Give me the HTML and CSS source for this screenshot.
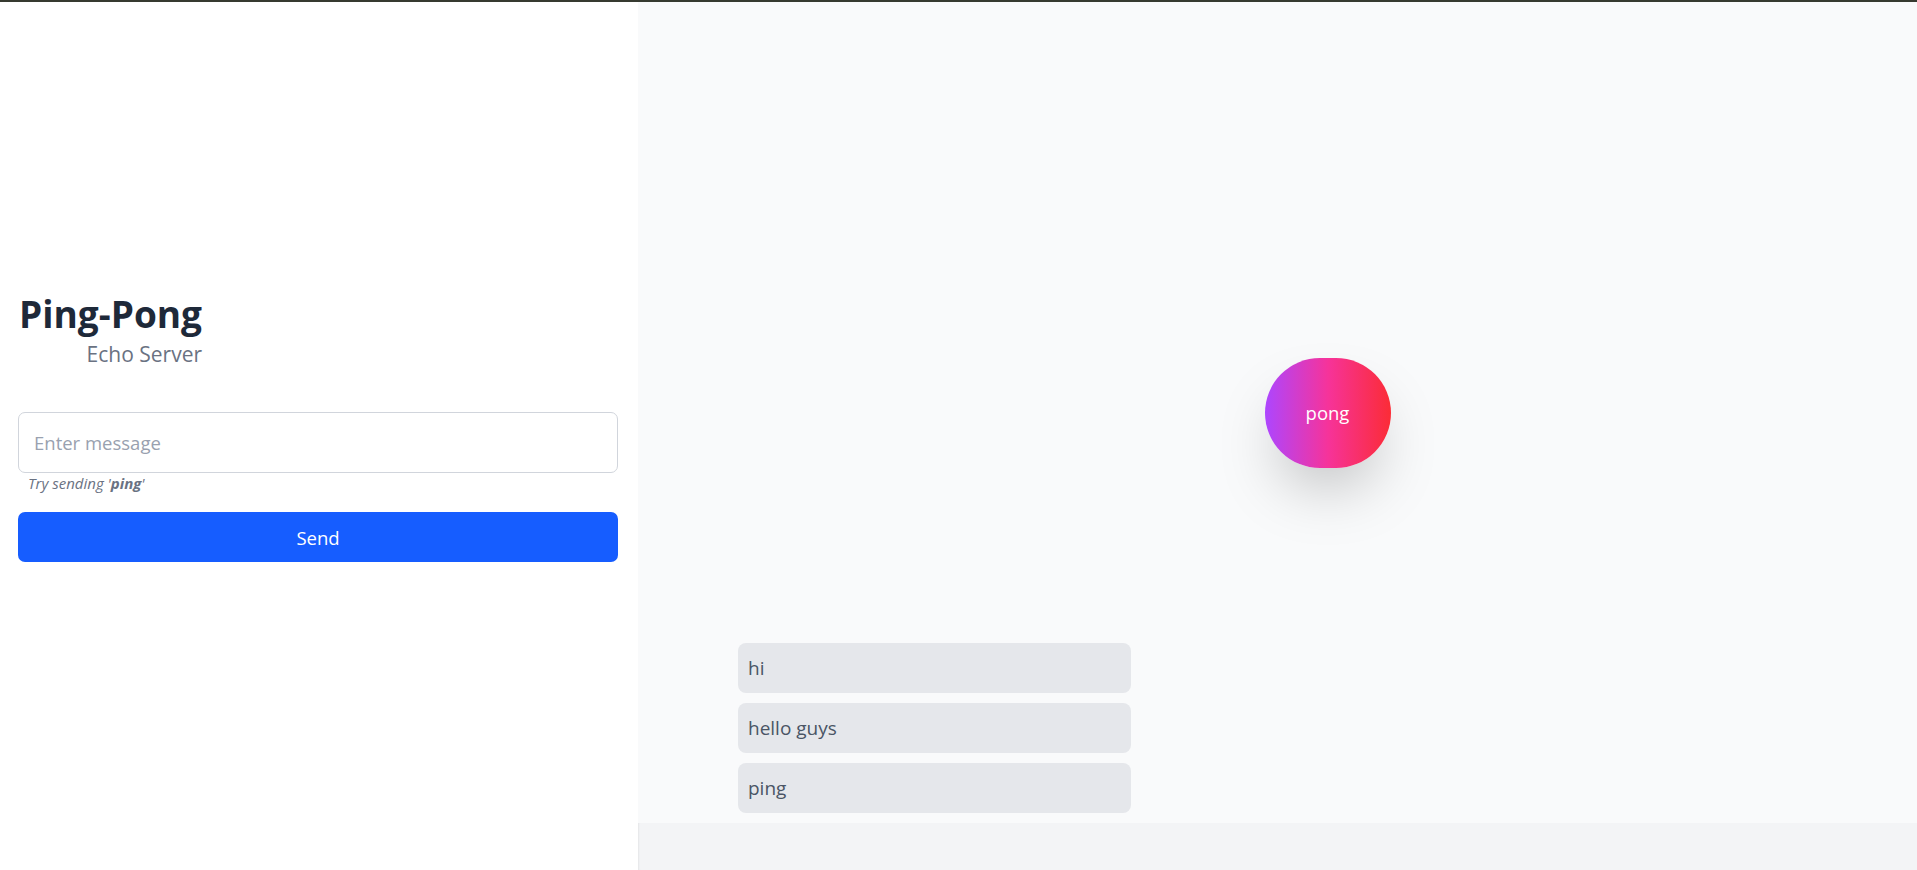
FILE: index.html
```html
<!DOCTYPE html>
<html lang="en">
<head>
<meta charset="utf-8">
<title>Ping-Pong Echo Server</title>
<link rel="stylesheet" href="styles.css">
</head>
<body>
<div class="topbar"></div>
<div class="app">
  <aside class="sidebar">
    <div class="brand">
      <h1 class="title">Ping-Pong</h1>
      <p class="subtitle">Echo Server</p>
    </div>
    <form class="composer">
      <input class="msg-input" type="text" placeholder="Enter message">
      <p class="hint">Try sending '<b>ping</b>'</p>
      <button class="send" type="button">Send</button>
    </form>
  </aside>
  <main class="chat">
    <div class="feed">
      <div class="stage"><div class="pong">pong</div></div>
      <ul class="messages">
        <li class="bubble">hi</li>
        <li class="bubble">hello guys</li>
        <li class="bubble">ping</li>
      </ul>
    </div>
    <div class="footer"></div>
  </main>
</div>
</body>
</html>
```
FILE: styles.css
```css
* { box-sizing: border-box; }
html, body {
  margin: 0;
  padding: 0;
  height: 870px;
  overflow: hidden;
  font-family: "Open Sans", "Noto Sans", "Liberation Sans", sans-serif;
  background: #ffffff;
}
.topbar {
  height: 2px;
  background: #363a30;
}
.app {
  display: flex;
  height: 868px;
}
.sidebar {
  width: 638px;
  flex: none;
  background: #ffffff;
  padding: 289px 20px 0 18px;
  display: flex;
  flex-direction: column;
}
.brand {
  width: fit-content;
  padding-left: 1px;
}
.title {
  margin: 0;
  font-size: 37px;
  line-height: 45px;
  font-weight: 700;
  color: #1e2939;
}
.subtitle {
  margin: 4px 0 0;
  text-align: right;
  font-size: 21px;
  line-height: 28px;
  color: #6a7282;
}
.composer {
  margin-top: 44px;
  display: flex;
  flex-direction: column;
}
.msg-input {
  width: 600px;
  height: 61px;
  border: 1px solid #d1d5dc;
  border-radius: 7px;
  padding: 0 15px;
  font-family: inherit;
  font-size: 18.5px;
  color: #1e2939;
  background: #ffffff;
  outline: none;
}
.msg-input::placeholder { color: #99a1af; }
.hint {
  margin: 0;
  padding-left: 10px;
  font-size: 15px;
  line-height: 20px;
  font-style: italic;
  color: #6a7282;
}
.hint b { font-weight: 700; }
.send {
  margin-top: 19px;
  width: 600px;
  height: 50px;
  border: none;
  border-radius: 7px;
  background: #165dff;
  color: #ffffff;
  font-family: inherit;
  font-size: 18.5px;
}
.chat {
  flex: 1;
  display: flex;
  flex-direction: column;
  background: #f9fafb;
}
.feed {
  flex: 1;
  position: relative;
  display: flex;
  flex-direction: column;
  justify-content: flex-end;
  padding: 0 0 10px 100px;
}
.stage {
  position: absolute;
  top: 0;
  right: 0;
  bottom: 0;
  left: 100px;
  display: flex;
  align-items: center;
  justify-content: center;
}
.pong {
  width: 126px;
  height: 110px;
  border-radius: 9999px;
  background: linear-gradient(to right, #ad46ff, #f6339a, #fb2c36);
  box-shadow: 0 31px 62px -15px rgba(0, 0, 0, 0.25);
  color: #ffffff;
  font-size: 18.5px;
  display: flex;
  align-items: center;
  justify-content: center;
}
.messages {
  list-style: none;
  margin: 0;
  padding: 0;
  width: 393px;
  display: flex;
  flex-direction: column;
  gap: 10px;
}
.bubble {
  height: 50px;
  padding: 0 10px;
  border-radius: 8px;
  background: #e5e7eb;
  color: #4a5565;
  font-size: 19px;
  display: flex;
  align-items: center;
}
.footer {
  height: 47px;
  background: #f3f4f6;
  box-shadow: inset 2px 0 2px -1px rgba(0, 0, 0, 0.06);
}
```
